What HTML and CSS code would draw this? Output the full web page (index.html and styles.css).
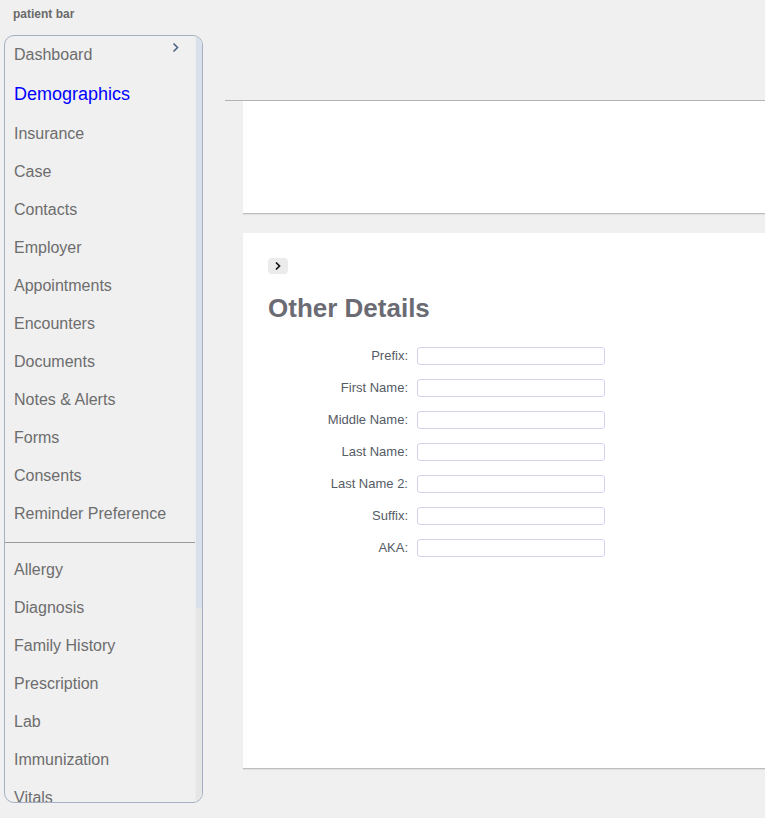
FILE: index.html
```html
<!DOCTYPE html>
<html lang="en">
<head>
<meta charset="utf-8">
<title>Patient</title>
<link rel="stylesheet" href="styles.css">
</head>
<body>
<header class="topbar">patient bar</header>
<div class="layout">
  <nav class="sidebar">
    <div class="menu">
      <a class="item">Dashboard</a>
      <a class="item active">Demographics</a>
      <a class="item">Insurance</a>
      <a class="item">Case</a>
      <a class="item">Contacts</a>
      <a class="item">Employer</a>
      <a class="item">Appointments</a>
      <a class="item">Encounters</a>
      <a class="item">Documents</a>
      <a class="item">Notes &amp; Alerts</a>
      <a class="item">Forms</a>
      <a class="item">Consents</a>
      <a class="item">Reminder Preference</a>
      <hr class="sep">
      <a class="item">Allergy</a>
      <a class="item">Diagnosis</a>
      <a class="item">Family History</a>
      <a class="item">Prescription</a>
      <a class="item">Lab</a>
      <a class="item">Immunization</a>
      <a class="item">Vitals</a>
    </div>
    <div class="scrollbar"><div class="thumb"></div></div>
    <svg class="collapse" width="8" height="11" viewBox="0 0 8 11"><path d="M1.5 1.5 L5.5 5.5 L1.5 9.5" fill="none" stroke="#4d6480" stroke-width="1.6"/></svg>
  </nav>
  <main class="main">
    <div class="rule">
      <section class="panel top-panel"></section>
    </div>
    <section class="panel details">
      <button class="toggle"><svg width="8" height="10" viewBox="0 0 8 10"><path d="M2 1.5 L5.5 5 L2 8.5" fill="none" stroke="#111" stroke-width="1.7"/></svg></button>
      <h2 class="title">Other Details</h2>
      <form class="form">
        <label class="lbl">Prefix:</label><input class="field" type="text">
        <label class="lbl">First Name:</label><input class="field" type="text">
        <label class="lbl">Middle Name:</label><input class="field" type="text">
        <label class="lbl">Last Name:</label><input class="field" type="text">
        <label class="lbl">Last Name 2:</label><input class="field" type="text">
        <label class="lbl">Suffix:</label><input class="field" type="text">
        <label class="lbl">AKA:</label><input class="field" type="text">
      </form>
    </section>
  </main>
</div>
</body>
</html>
```
FILE: styles.css
```css
* { box-sizing: border-box; }
html, body { margin: 0; padding: 0; }
body {
  background: #f0f0f0;
  font-family: "Liberation Sans", Arial, sans-serif;
  color: #6d6d6d;
  width: 765px;
  height: 818px;
  overflow: hidden;
}
.topbar {
  height: 35px;
  padding: 7px 0 0 13px;
  font-size: 12px;
  font-weight: bold;
  color: #6a6a6a;
  line-height: 14px;
}
.layout {
  display: flex;
  gap: 22px;
  padding-left: 4px;
}
.sidebar {
  position: relative;
  flex: 0 0 199px;
  height: 768px;
  border: 1px solid #a4b0c2;
  border-radius: 10px;
  overflow: hidden;
  display: flex;
}
.menu {
  flex: 1;
  display: flex;
  flex-direction: column;
  overflow: hidden;
}
.item {
  display: block;
  height: 38px;
  line-height: 38px;
  padding-left: 9px;
  font-size: 16px;
  color: #6d6d6d;
  white-space: nowrap;
  flex: 0 0 auto;
}
.item.active {
  height: 41px;
  line-height: 40px;
  font-size: 18px;
  color: #0000ff;
}
.sep {
  border: 0;
  border-top: 1px solid #9a9a9a;
  margin: 9px 0 8px;
  height: 0;
  flex: 0 0 auto;
}
.scrollbar {
  flex: 0 0 7px;
  background: #e6e6e6;
  border-left: 1px solid #ececec;
}
.thumb {
  height: 572px;
  background: #d7e0eb;
}
.collapse {
  position: absolute;
  top: 6px;
  left: 167px;
}
.main {
  flex: 1;
  padding-top: 65px;
}
.rule {
  border-top: 1px solid #b3b3b3;
  padding-left: 18px;
}
.panel {
  background: #fff;
  border-bottom: 1px solid #bdbdbd;
  box-shadow: 0 1px 1px rgba(0,0,0,0.06);
}
.top-panel {
  height: 113px;
}
.details {
  margin: 19px 0 0 18px;
  height: 536px;
  padding: 25px 0 0 25px;
}
.toggle {
  display: flex;
  align-items: center;
  justify-content: center;
  width: 20px;
  height: 16px;
  padding: 0;
  border: 0;
  border-radius: 4px;
  background: #ebebeb;
}
.title {
  margin: 19px 0 0;
  font-size: 26px;
  line-height: 30px;
  font-weight: bold;
  color: #6b6b74;
}
.form {
  margin-top: 24px;
  display: grid;
  grid-template-columns: 140px 188px;
  column-gap: 9px;
  row-gap: 14px;
  align-items: center;
}
.lbl {
  text-align: right;
  font-size: 13px;
  color: #555b66;
  line-height: 18px;
}
.field {
  width: 188px;
  height: 18px;
  border: 1px solid #d6d2ec;
  border-radius: 3px;
  background: #fff;
  padding: 0 4px;
  margin: 0;
}
```
